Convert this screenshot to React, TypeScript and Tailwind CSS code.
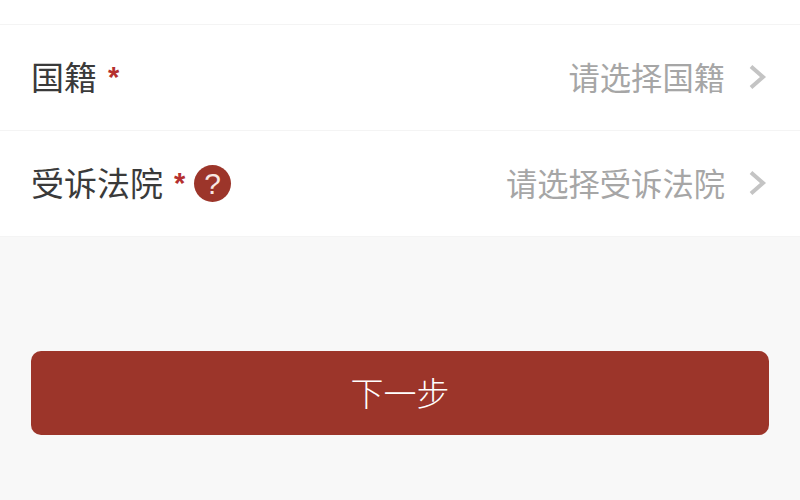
const Chevron = () => (
  <svg width="18" height="26" viewBox="0 0 18 26" fill="none" className="ml-[24px] shrink-0">
    <path d="M2 2.5 L14 13 L2 23.5" stroke="#c4c4c4" strokeWidth="4" />
  </svg>
);

const Row = ({ label, placeholder, help }: { label: string; placeholder: string; help?: boolean }) => (
  <div className="h-[106px] flex items-center justify-between pl-[31px] pr-[33px] border-b border-[#f4f4f4]">
    <div className="flex items-center">
      <span className="text-[33px] leading-none text-[#3a3a3a] font-normal pb-[2px]">{label}</span>
      <span className="ml-[11px] w-[12px] text-[29px] leading-none text-[#b5302f] font-bold font-['Liberation_Sans',sans-serif]">*</span>
      {help && (
        <span className="ml-[8px] w-[37px] h-[37px] rounded-full bg-[#9c352a] flex items-center justify-center text-[#f8e8e4] text-[30px] leading-none font-['Liberation_Sans',sans-serif]">
          ?
        </span>
      )}
    </div>
    <div className="flex items-center">
      <span className="text-[31.3px] leading-none text-[#a6a6a6] font-normal pb-[2px]">{placeholder}</span>
      <Chevron />
    </div>
  </div>
);

export default function App() {
  return (
    <div className="w-[800px] h-[500px] overflow-hidden bg-[#f8f8f8] font-['Noto_Sans_CJK_SC',sans-serif]">
      <div className="bg-white">
        <div className="h-[25px] border-b border-[#f4f4f4]" />
        <Row label="国籍" placeholder="请选择国籍" />
        <Row label="受诉法院" placeholder="请选择受诉法院" help />
      </div>
      <div className="px-[31px] pt-[114px]">
        <button className="w-full h-[84px] rounded-[10px] bg-[#9c352a] text-white text-[33px] font-light">
          下一步
        </button>
      </div>
    </div>
  );
}
